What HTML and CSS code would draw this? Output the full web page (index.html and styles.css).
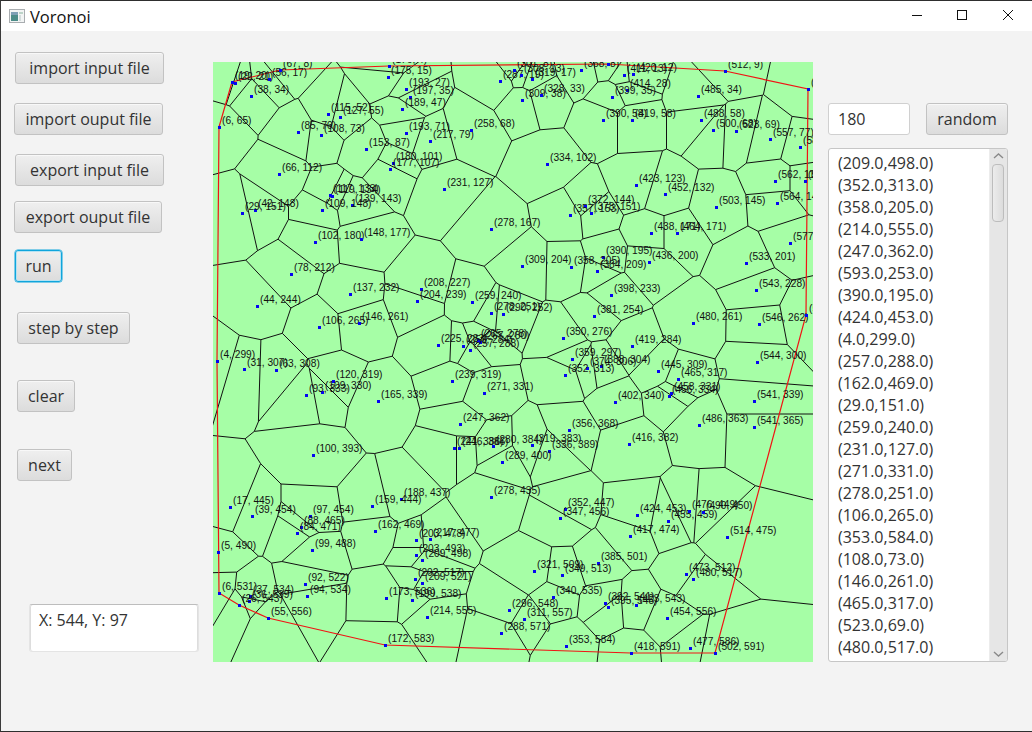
FILE: index.html
```html
<!DOCTYPE html>
<html lang="en">
<head>
<meta charset="utf-8">
<title>Voronoi</title>
<link rel="stylesheet" href="styles.css">
</head>
<body>
<div class="window">
  <header class="titlebar">
    <svg class="app-icon" width="16" height="14" viewBox="0 0 16 14">
      <rect x="0.5" y="0.5" width="15" height="13" fill="#f2f4f4" stroke="#a9adb0"/>
      <rect x="2" y="3" width="7" height="9" fill="#4c8c88"/>
      <rect x="2" y="3" width="7" height="3" fill="#7e9fb5"/>
      <rect x="10" y="3" width="4" height="2" fill="#bcd3c8"/>
      <rect x="10" y="6" width="2" height="6" fill="#d3dcdc"/>
    </svg>
    <span class="title">Voronoi</span>
    <div class="controls">
      <svg class="ctl" width="46" height="30" viewBox="0 0 46 30"><path class="ctl-line" d="M18 14.500H28"/></svg>
      <svg class="ctl" width="46" height="30" viewBox="0 0 46 30"><rect class="ctl-line" x="17.500" y="9.500" width="9" height="9"/></svg>
      <svg class="ctl" width="46" height="30" viewBox="0 0 46 30"><path class="ctl-line" d="M17 9L27 19M27 9L17 19"/></svg>
    </div>
  </header>
  <main class="content">
    <section class="left">
      <button class="btn b-import-in">import input file</button>
      <button class="btn b-import-out">import ouput file</button>
      <button class="btn b-export-in">export input file</button>
      <button class="btn b-export-out">export ouput file</button>
      <button class="btn b-run">run</button>
      <button class="btn b-step">step by step</button>
      <button class="btn b-clear">clear</button>
      <button class="btn b-next">next</button>
      <div class="coords">X: 544, Y: 97</div>
    </section>
    <svg id="board" class="board" width="600" height="600" viewBox="0 0 600 600"></svg>
    <section class="right">
      <div class="random-row">
        <div class="count">180</div>
        <button class="btn b-random">random</button>
      </div>
      <div class="listbox">
        <ul class="rows">
          <li>(209.0,498.0)</li>
          <li>(352.0,313.0)</li>
          <li>(358.0,205.0)</li>
          <li>(214.0,555.0)</li>
          <li>(247.0,362.0)</li>
          <li>(593.0,253.0)</li>
          <li>(390.0,195.0)</li>
          <li>(424.0,453.0)</li>
          <li>(4.0,299.0)</li>
          <li>(257.0,288.0)</li>
          <li>(162.0,469.0)</li>
          <li>(29.0,151.0)</li>
          <li>(259.0,240.0)</li>
          <li>(231.0,127.0)</li>
          <li>(271.0,331.0)</li>
          <li>(278.0,251.0)</li>
          <li>(106.0,265.0)</li>
          <li>(353.0,584.0)</li>
          <li>(108.0,73.0)</li>
          <li>(146.0,261.0)</li>
          <li>(465.0,317.0)</li>
          <li>(523.0,69.0)</li>
          <li>(480.0,517.0)</li>
        </ul>
        <div class="scrollbar">
          <svg class="arrow" width="17" height="14" viewBox="0 0 17 14"><path class="chev" d="M4 9L8.500 5L13 9"/></svg>
          <div class="track"><div class="thumb"></div></div>
          <svg class="arrow" width="17" height="14" viewBox="0 0 17 14"><path class="chev" d="M4 5L8.500 9L13 5"/></svg>
        </div>
      </div>
    </section>
  </main>
</div>
<script src="script.js"></script>
</body>
</html>
```
FILE: styles.css
```css
* { box-sizing: border-box; }
html, body { margin: 0; padding: 0; }
body { width: 1032px; height: 732px; overflow: hidden; background: #f3f3f3; }
.window {
  width: 1032px; height: 732px;
  display: flex; flex-direction: column;
  border-top: 1px solid #2e2e2e;
  border-left: 1px solid #3a3a3a;
  border-bottom: 1px solid #2e2e2e;
  background: #f3f3f3;
  font-family: "Open Sans", "Noto Sans", sans-serif;
  color: #333;
}
.titlebar {
  height: 30px; flex: none;
  display: flex; align-items: center;
  background: #fff;
  padding-left: 8px;
}
.app-icon { flex: none; }
.title { margin-left: 5px; font-size: 16.500px; color: #111; }
.controls { margin-left: auto; display: flex; }
.ctl { display: block; flex: none; }
.ctl-line { fill: none; stroke: #111; stroke-width: 1; }
.content { flex: 1; display: flex; align-items: flex-start; }
.left {
  width: 212px; flex: none;
  display: flex; flex-direction: column; align-items: flex-start;
  padding-top: 21px;
}
.btn {
  display: block; height: 32px; padding: 0;
  font: inherit; font-size: 16px; color: #333;
  background: linear-gradient(#efefef, #dcdcdc);
  border: 1px solid #c2c2c2; border-radius: 3px;
  box-shadow: inset 0 1px 0 #f8f8f8;
}
.b-import-in { width: 149px; margin-left: 14px; }
.b-import-out { width: 149px; margin-left: 13px; margin-top: 19px; }
.b-export-in { width: 149px; margin-left: 14px; margin-top: 19px; }
.b-export-out { width: 148px; margin-left: 13px; margin-top: 15px; }
.b-run {
  width: 47px; margin-left: 14px; margin-top: 17px;
  border-color: #0fa5dc;
  box-shadow: 0 0 0 0.500px #0fa5dc, inset 0 0 0 1px #b5e2f2;
}
.b-step { width: 113px; margin-left: 16px; margin-top: 30px; }
.b-clear { width: 58px; margin-left: 16px; margin-top: 36px; }
.b-next { width: 55px; margin-left: 16px; margin-top: 37px; }
.coords {
  width: 170px; height: 48px; margin-left: 28px; margin-top: 123px;
  padding: 3px 8px 3px 9px; background: #fff; font-size: 16px; line-height: 24px;
  border: 1px solid #e4e4e4; border-top-color: #bdbdbd; border-radius: 3px;
  box-shadow: inset 1px 0 0 #ddd, inset -1px 0 0 #ddd;
}
.board { flex: none; display: block; margin-top: 31px; background: #a6fea6; overflow: hidden; }
.edges { fill: none; stroke: #111; stroke-width: 1; }
.hull { fill: none; stroke: #f01414; stroke-width: 1.200; }
.dot { fill: #0505f0; }
.lab { font-family: "Liberation Sans", Arial, sans-serif; font-size: 10.200px; fill: #111; }
.right { width: 180px; flex: none; margin-left: 15px; margin-top: 72px; }
.random-row { display: flex; justify-content: space-between; }
.count {
  width: 82px; height: 32px; padding: 0 9px;
  background: #fff; font-size: 16px; line-height: 30px;
  border: 1px solid #d0d0d0; border-radius: 3px;
}
.b-random { width: 82px; }
.listbox {
  margin-top: 13px; height: 514px;
  display: flex; overflow: hidden;
  background: #fff;
  border: 1px solid #c6c6c6; border-radius: 3px;
}
.rows {
  flex: 1; margin: 0; padding: 3px 0 0 9px; list-style: none;
  font-size: 16px; line-height: 22px;
}
.rows li { height: 22px; }
.scrollbar {
  width: 18px; flex: none;
  display: flex; flex-direction: column;
  background: #e6e6e6; border-left: 1px solid #ececec;
}
.arrow { display: block; flex: none; }
.chev { fill: none; stroke: #8a8a8a; stroke-width: 1.400; }
.track { flex: 1; padding: 1px 3px 0 2px; }
.thumb {
  height: 58px;
  background: linear-gradient(90deg, #ececec, #dcdcdc);
  border: 1px solid #bdbdbd; border-radius: 4px;
}
```
FILE: script.js
```js
var SITES = [
[6,65],[19,20],[22,21],[38,34],[56,17],[67,8],[176,4],[175,15],[193,27],[197,35],[189,47],[115,52],[127,55],
[85,70],[108,73],[153,87],[193,71],[217,79],[258,68],[180,101],[177,107],[66,112],[231,127],[278,167],
[117,133],[119,134],[139,143],[109,148],[42,148],[29,151],[102,180],[148,177],
[287,19],[301,8],[308,13],[319,17],[309,38],[328,33],[368,8],[395,2],[411,13],[420,12],[414,28],[399,35],
[390,58],[419,58],[485,34],[512,9],[523,69],[500,68],[488,58],[557,77],[587,85],[595,27],[562,119],[592,119],
[564,141],[577,181],[334,102],[423,123],[452,132],[503,145],[372,144],[357,153],[378,151],[438,171],[464,171],
[390,195],[309,204],[358,205],[384,209],[436,200],[533,201],[543,228],[398,233],[381,254],[480,261],[546,262],
[593,253],[350,276],[419,284],[359,297],[374,306],[388,304],[352,313],[445,309],[465,317],[544,300],[458,331],
[456,334],[402,340],[541,339],[486,363],[541,365],[356,368],[416,382],[319,383],[336,389],
[78,212],[44,244],[137,232],[208,227],[204,239],[259,240],[278,251],[290,252],[106,265],[146,261],[225,283],
[250,284],[265,278],[267,280],[257,288],[4,299],[31,307],[63,308],[120,319],[109,330],[93,333],[165,339],
[239,319],[271,331],[247,362],[241,386],[246,386],[280,384],[289,400],[100,393],
[17,445],[39,454],[188,437],[159,444],[97,454],[88,465],[84,471],[278,435],[162,469],[203,478],[217,477],
[99,488],[5,490],[203,493],[209,498],[92,522],[202,517],[209,521],[6,531],[94,534],[37,534],[36,539],[26,543],
[173,536],[199,538],[214,555],[55,556],[172,583],[296,548],[288,571],
[352,447],[347,456],[424,453],[455,459],[476,449],[490,450],[417,474],[514,475],[385,501],[473,512],[480,517],
[321,509],[349,513],[340,535],[392,541],[395,545],[423,543],[311,557],[454,556],[353,584],[477,586],[418,591],[502,591]
];
var HULL = [[6,65],[19,20],[67,8],[176,4],[395,2],[512,9],[595,27],[593,253],[502,591],[418,591],[172,583],[55,556],[26,543],[6,531],[4,299]];
var SVG_NS = "http://www.w3.org/2000/svg";

function cellEdges(i) {
  var s = SITES[i], R = 4000;
  var poly = [
    {x: -R, y: -R, e: -1}, {x: R, y: -R, e: -1},
    {x: R, y: R, e: -1}, {x: -R, y: R, e: -1}
  ];
  for (var j = 0; j < SITES.length; j++) {
    if (j === i) continue;
    var t = SITES[j];
    var nx = t[0] - s[0], ny = t[1] - s[1];
    if (nx === 0 && ny === 0) continue;
    var mx = (t[0] + s[0]) / 2, my = (t[1] + s[1]) / 2;
    var next = [];
    for (var k = 0; k < poly.length; k++) {
      var a = poly[k], b = poly[(k + 1) % poly.length];
      var da = (a.x - mx) * nx + (a.y - my) * ny;
      var db = (b.x - mx) * nx + (b.y - my) * ny;
      var u = da / (da - db);
      if (da <= 0) {
        if (db <= 0) {
          next.push(a);
        } else {
          next.push(a);
          next.push({x: a.x + (b.x - a.x) * u, y: a.y + (b.y - a.y) * u, e: j});
        }
      } else if (db <= 0) {
        next.push({x: a.x + (b.x - a.x) * u, y: a.y + (b.y - a.y) * u, e: a.e});
      }
    }
    poly = next;
  }
  return poly;
}

function add(board, name, cls, attrs) {
  var el = document.createElementNS(SVG_NS, name);
  el.setAttribute("class", cls);
  for (var key in attrs) el.setAttribute(key, attrs[key]);
  board.appendChild(el);
  return el;
}

function draw() {
  var board = document.getElementById("board");
  var d = "";
  SITES.forEach(function (_, i) {
    var poly = cellEdges(i);
    poly.forEach(function (a, k) {
      if (a.e > i) {
        var b = poly[(k + 1) % poly.length];
        d += "M" + a.x.toFixed(1) + " " + a.y.toFixed(1) + "L" + b.x.toFixed(1) + " " + b.y.toFixed(1);
      }
    });
  });
  add(board, "path", "edges", {d: d});
  add(board, "polygon", "hull", {points: HULL.map(function (p) { return p.join(","); }).join(" ")});
  SITES.forEach(function (p) {
    add(board, "rect", "dot", {x: p[0] - 1, y: p[1] - 1, width: 3, height: 3});
    var text = add(board, "text", "lab", {x: p[0] + 3, y: p[1] - 3});
    text.textContent = "(" + p[0] + ", " + p[1] + ")";
  });
}

draw();
```
